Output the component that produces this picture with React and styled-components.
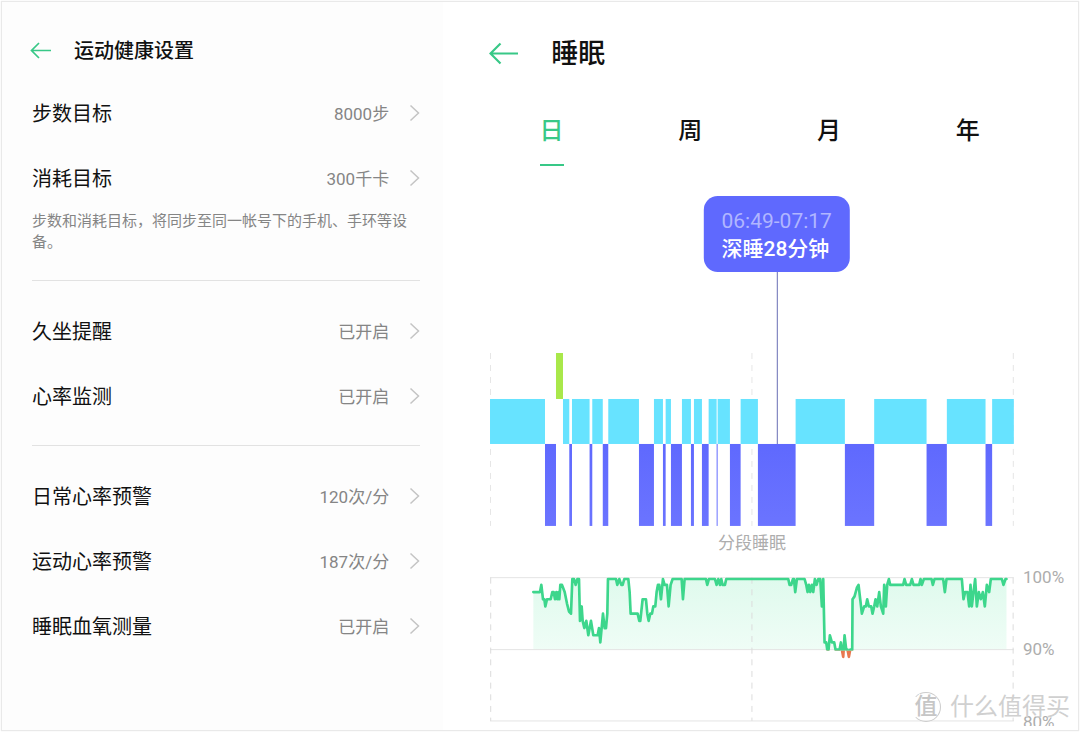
import React, { useState } from "react";
import styled, { createGlobalStyle } from "styled-components";

const GlobalStyle = createGlobalStyle`
  * {
    box-sizing: border-box;
  }

  body {
    margin: 0;
    background: #ffffff;
    color: #111111;
    font-family: Roboto, "Noto Sans CJK SC", sans-serif;
  }

  button {
    padding: 0;
    border: 0;
    background: none;
    color: inherit;
    font: inherit;
    cursor: pointer;
  }
`;

const Page = styled.div`
  display: flex;
  min-height: 100vh;
  padding: 1px;
`;

const Frame = styled.main`
  position: relative;
  flex: 1;
  display: grid;
  grid-template-columns: 41fr 59fr;
  border: 1px solid #e9e9e9;
  box-shadow: 0 0 1px #e4e4e4;
`;

const SettingsPanel = styled.section`
  padding: 30px 23px 0 30px;
  background: #fdfdfd;
`;

const SleepPanel = styled.section`
  padding-top: 30px;
`;

const Header = styled.header`
  display: flex;
  align-items: center;
  gap: ${props => (props.$large ? 32 : 23)}px;
  height: ${props => (props.$large ? 44 : 38)}px;
  padding-left: ${props => (props.$large ? 46 : 0)}px;
  margin-left: ${props => (props.$large ? 0 : -2)}px;
`;

const BackButton = styled.button`
  display: flex;
  color: #38c887;
`;

const Title = styled.h1`
  margin: 0;
  font-size: ${props => (props.$large ? 27 : 20)}px;
  line-height: 38px;
  font-weight: 500;
`;

const Group = styled.ul`
  list-style: none;
  margin: 0;
  padding: 11px 0 0;
`;

const Row = styled.button`
  display: flex;
  align-items: center;
  width: 100%;
  height: 65px;
  text-align: left;
`;

const RowLabel = styled.span`
  flex: 1;
  font-size: 20px;
  line-height: 28px;
`;

const RowValue = styled.span`
  margin-right: 20px;
  font-size: 17px;
  line-height: 28px;
  color: #858585;
`;

const Note = styled.p`
  margin: 0;
  padding-bottom: 11px;
  font-size: 15px;
  line-height: 21px;
  color: #858585;
`;

const Divider = styled.hr`
  height: 1px;
  margin: 16px 0 7px;
  border: 0;
  background: #e2e2e2;
`;

const Tabs = styled.div`
  display: grid;
  grid-template-columns: repeat(4, 1fr);
  justify-items: center;
  margin: 37px 41px 30px 39px;
`;

const Tab = styled.button`
  && {
    width: 24px;
    padding-bottom: 15px;
    border-bottom: 2px solid
      ${props => (props.$active ? "#38c887" : "transparent")};
    color: ${props => (props.$active ? "#38c887" : "#111111")};
    font-size: 24px;
    font-weight: 500;
    line-height: 36px;
  }
`;

const StagePlot = styled.div`
  position: relative;
  margin: 0 64px 0 47px;
  padding-top: 156px;
`;

const Tooltip = styled.div`
  position: absolute;
  top: 0;
  left: 54.7%;
  transform: translateX(-50%);
  padding: 11px 18px 9px;
  border-radius: 14px;
  background: #5f69fe;
  color: #ffffff;
  font-size: 21px;
  line-height: 28px;
  white-space: nowrap;

  &::after {
    content: "";
    position: absolute;
    top: 100%;
    left: 50%;
    width: 1px;
    height: 172px;
    background: #6a6fb5;
  }
`;

const TooltipTime = styled.div`
  color: #b1b6ff;
`;

const TooltipStage = styled.div`
  font-weight: 500;
`;

const ChartSvg = styled.svg`
  display: block;
  width: 100%;
  height: auto;
`;

const Caption = styled.p`
  margin: 5px 64px 12px 47px;
  text-align: center;
  font-size: 17px;
  line-height: 24px;
  color: #adadad;
`;

const OxygenPlot = styled.div`
  display: grid;
  grid-template-columns: 1fr 55px;
  column-gap: 9px;
  padding: 10px 0 4px 47px;
  overflow: hidden;
`;

const Scale = styled.div`
  display: flex;
  flex-direction: column;
  justify-content: space-between;
  margin: -10px 0;
  font-size: 17px;
  line-height: 20px;
  color: #adadad;
`;

const Watermark = styled.div`
  position: absolute;
  right: 8px;
  bottom: 7px;
  display: flex;
  align-items: center;
  gap: 9px;
  color: #d0d0d0;
  font-size: 24px;
  line-height: 32px;
  text-shadow: -1px -1px 0 #ffffff;
`;

const WatermarkLogo = styled.span`
  width: 30px;
  height: 30px;
  border: 1px solid #cccccc;
  border-left-color: transparent;
  border-radius: 50%;
  text-align: center;
  font-size: 23px;
  font-weight: 500;
  line-height: 28px;
  color: #c6c6c6;
`;

const groups = [
  {
    rows: [
      { label: "步数目标", value: "8000步" },
      { label: "消耗目标", value: "300千卡" },
    ],
    note: "步数和消耗目标，将同步至同一帐号下的手机、手环等设备。",
  },
  {
    rows: [
      { label: "久坐提醒", value: "已开启" },
      { label: "心率监测", value: "已开启" },
    ],
  },
  {
    rows: [
      { label: "日常心率预警", value: "120次/分" },
      { label: "运动心率预警", value: "187次/分" },
      { label: "睡眠血氧测量", value: "已开启" },
    ],
  },
];

const tabs = ["日", "周", "月", "年"];

const stageStyle = {
  awake: { y: 1, height: 46, fill: "#a9e84a" },
  light: { y: 47, height: 45, fill: "#67e3ff" },
  deep: { y: 92, height: 82, fill: "url(#deepFill)" },
};

// [stage, start]; each one lasts until the next begins
const stages = [
  ["light", 0],
  ["deep", 55],
  ["awake", 66],
  ["light", 73],
  ["deep", 79.3],
  ["light", 82],
  ["deep", 99.6],
  ["light", 102.3],
  ["deep", 112.8],
  ["light", 118.3],
  ["deep", 149],
  ["light", 164],
  ["deep", 173],
  ["light", 175.7],
  ["deep", 181],
  ["light", 192],
  ["deep", 201],
  ["light", 204],
  ["deep", 212],
  ["light", 218.7],
  ["deep", 226.7],
  ["light", 227.7],
  ["deep", 240],
  ["light", 250.7],
  ["deep", 268],
  ["light", 305.7],
  ["deep", 355],
  ["light", 384.3],
  ["deep", 436.7],
  ["light", 457],
  ["deep", 495.7],
  ["light", 502.3],
];

const NIGHT_END = 524;

// [x, percent]
const oxygen = [
  [130, 98], [150, 98], [154, 99], [159, 97], [163, 97], [166, 96], [171, 97],
  [182, 97], [187, 98], [191, 98], [195, 97], [199, 98], [202, 97], [206, 98],
  [208, 97], [211, 99], [216, 99], [224, 98], [231, 96.4], [237, 95.3],
  [243, 95], [247, 100], [252, 100], [257, 99], [262, 100], [267, 100],
  [270, 94], [275, 96], [278, 94], [283, 93], [289, 94], [295, 92], [303, 94],
  [310, 92], [323, 92], [327, 93], [331, 91], [339, 95], [344, 93], [348, 93],
  [352, 95], [354, 100], [378, 100], [382, 99], [388, 100], [394, 99],
  [398, 99], [403, 100], [415, 100], [419, 98], [422, 95], [443, 95],
  [448, 94], [451, 94], [458, 97], [468, 97], [472, 95], [476, 94], [481, 95],
  [486, 95], [490, 96], [496, 96], [500, 98], [504, 99], [508, 99], [513, 97],
  [519, 100], [524, 99], [531, 99], [536, 96], [542, 99], [548, 100],
  [575, 100], [579, 97], [584, 100], [648, 100], [652, 99], [657, 100],
  [675, 100], [680, 99], [685, 100], [690, 99], [694, 100], [698, 99],
  [705, 99], [709, 100], [895, 100], [899, 99], [904, 99], [909, 100],
  [912, 100], [916, 98], [921, 100], [944, 100], [949, 99], [953, 98],
  [957, 99], [961, 98], [966, 99], [970, 98], [975, 100], [980, 99],
  [985, 100], [991, 100], [996, 96], [1000, 100], [1004, 91], [1009, 91],
  [1012, 90], [1016, 90], [1020, 92], [1026, 91], [1033, 91], [1037, 90],
  [1049, 90], [1053, 91], [1056, 90], [1060, 89], [1064, 92], [1069, 90],
  [1073, 90], [1077, 89], [1081, 90], [1087, 90], [1088, 97], [1094, 97.4],
  [1101, 98.6], [1106, 99], [1111, 97], [1116, 95], [1123, 96], [1128, 96],
  [1132, 97], [1137, 96], [1144, 96], [1148, 95], [1153, 96], [1157, 97],
  [1162, 96], [1168, 98], [1173, 96], [1180, 95], [1183, 99], [1188, 96],
  [1192, 99], [1197, 100], [1201, 99], [1240, 99], [1244, 100], [1249, 99],
  [1261, 99], [1266, 100], [1271, 99], [1288, 99], [1292, 100], [1296, 99],
  [1302, 100], [1325, 100], [1329, 99], [1334, 100], [1360, 100], [1365, 98],
  [1370, 100], [1416, 100], [1421, 97], [1426, 98], [1433, 98], [1438, 96],
  [1442, 99], [1446, 96], [1451, 98], [1456, 100], [1461, 96], [1467, 98],
  [1473, 97], [1479, 98], [1485, 96], [1491, 99], [1498, 98], [1503, 100],
  [1536, 100], [1541, 99], [1547, 100], [1550, 100],
];

const oxygenY = percent => (percent === 100 ? 6 : (100 - percent) * 21.6 + 2);

const oxygenLine = oxygen
  .map(([x, percent]) => `${x},${oxygenY(percent)}`)
  .join(" ");

const BackArrow = ({ large }) =>
  large ? (
    <svg width="30" height="24" viewBox="0 0 30 24" fill="none">
      <path d="M11.5 1.500 1.500 11.500l10 10M1.500 11.500H29" stroke="currentColor" strokeWidth="2.200" />
    </svg>
  ) : (
    <svg width="21" height="18" viewBox="0 0 21 18" fill="none">
      <path d="M9 1 1.500 8.500 9 16M1.500 8.500H21" stroke="currentColor" strokeWidth="1.700" />
    </svg>
  );

const Chevron = () => (
  <svg width="11" height="20" viewBox="0 0 11 20" fill="none">
    <path d="m1.500 1.500 8 7.500-8 7.500" stroke="#c4c4c4" strokeWidth="1.500" />
  </svg>
);

const StageChart = () => (
  <ChartSvg viewBox="0 0 524 174" role="img" aria-label="分段睡眠">
    <defs>
      <linearGradient id="deepFill" x1="0" y1="0" x2="0" y2="1">
        <stop offset="0" stopColor="#5f69fe" />
        <stop offset="1" stopColor="#6b74ff" />
      </linearGradient>
    </defs>
    <path
      d="M.5 1v173M262 1v173M523.500 1v173"
      stroke="#e6e6e6"
      strokeDasharray="6 6"
    />
    {stages.map(([stage, start], i) => {
      const end = i + 1 < stages.length ? stages[i + 1][1] : NIGHT_END;
      return (
        <rect key={start} x={start} width={end - start} {...stageStyle[stage]} />
      );
    })}
  </ChartSvg>
);

const OxygenChart = () => (
  <ChartSvg viewBox="0 0 1572 434" role="img" aria-label="睡眠血氧">
    <defs>
      <linearGradient id="oxygenFill" x1="0" y1="0" x2="0" y2="1">
        <stop offset="0" stopColor="#dffaed" />
        <stop offset="1" stopColor="#f1fdf7" />
      </linearGradient>
      <clipPath id="normalRange">
        <rect width="1572" height="221" />
      </clipPath>
      <clipPath id="lowRange">
        <rect y="221" width="1572" height="211" />
      </clipPath>
    </defs>
    <polygon
      points={`130,218 ${oxygenLine} 1550,218`}
      fill="url(#oxygenFill)"
      clipPath="url(#normalRange)"
    />
    <path d="M0 2h1572M0 218h1572M0 432h1572" stroke="#e4e4e4" strokeWidth="3" />
    <path
      d="M2 2v430M786 2v430M1570 2v430"
      stroke="#dcdcdc"
      strokeWidth="3"
      strokeDasharray="18 17"
    />
    <g fill="none" strokeWidth="8" strokeLinejoin="round" strokeLinecap="round">
      <polyline points={oxygenLine} stroke="#3dd68c" clipPath="url(#normalRange)" />
      <polyline points={oxygenLine} stroke="#e8784f" clipPath="url(#lowRange)" />
    </g>
  </ChartSvg>
);

const App = () => {
  const [activeTab, setActiveTab] = useState("日");

  return (
    <Page>
      <GlobalStyle />
      <Frame>
        <SettingsPanel>
          <Header>
            <BackButton aria-label="返回">
              <BackArrow />
            </BackButton>
            <Title>运动健康设置</Title>
          </Header>
          {groups.map((group, i) => (
            <React.Fragment key={group.rows[0].label}>
              {i > 0 && <Divider />}
              <Group>
                {group.rows.map(row => (
                  <li key={row.label}>
                    <Row>
                      <RowLabel>{row.label}</RowLabel>
                      <RowValue>{row.value}</RowValue>
                      <Chevron />
                    </Row>
                  </li>
                ))}
              </Group>
              {group.note && <Note>{group.note}</Note>}
            </React.Fragment>
          ))}
        </SettingsPanel>
        <SleepPanel>
          <Header $large>
            <BackButton aria-label="返回">
              <BackArrow large />
            </BackButton>
            <Title $large>睡眠</Title>
          </Header>
          <Tabs role="tablist">
            {tabs.map(tab => (
              <Tab
                key={tab}
                role="tab"
                aria-selected={tab === activeTab}
                $active={tab === activeTab}
                onClick={() => setActiveTab(tab)}
              >
                {tab}
              </Tab>
            ))}
          </Tabs>
          <StagePlot>
            <StageChart />
            <Tooltip>
              <TooltipTime>06:49-07:17</TooltipTime>
              <TooltipStage>深睡28分钟</TooltipStage>
            </Tooltip>
          </StagePlot>
          <Caption>分段睡眠</Caption>
          <OxygenPlot>
            <OxygenChart />
            <Scale>
              <span>100%</span>
              <span>90%</span>
              <span>80%</span>
            </Scale>
          </OxygenPlot>
        </SleepPanel>
        <Watermark>
          <WatermarkLogo>值</WatermarkLogo>
          <span>什么值得买</span>
        </Watermark>
      </Frame>
    </Page>
  );
};

export default App;
